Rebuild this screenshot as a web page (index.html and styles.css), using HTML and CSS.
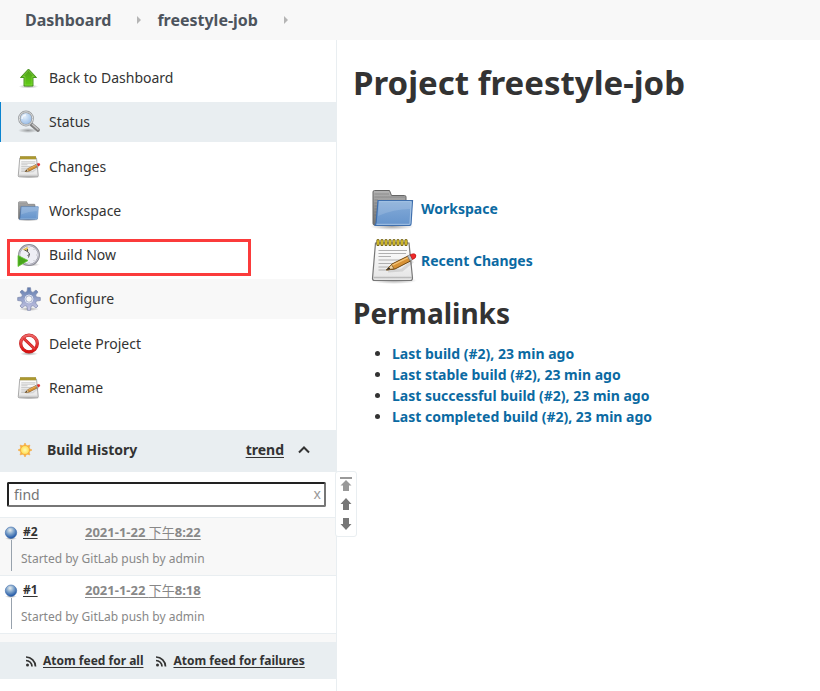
FILE: index.html
```
<!DOCTYPE html>
<html lang="en">
<head>
<meta charset="utf-8">
<title>freestyle-job [Jenkins]</title>
<link rel="stylesheet" href="styles.css">
</head>
<body>
<svg class="sprite" aria-hidden="true">
  <defs>
    <linearGradient id="g-green" x1="0" y1="0" x2="0" y2="1"><stop offset="0" stop-color="#4f9a1c"/><stop offset="1" stop-color="#62d016"/></linearGradient>
    <linearGradient id="g-folder" x1="0" y1="0" x2="0" y2="1"><stop offset="0" stop-color="#86acd8"/><stop offset="1" stop-color="#6594cc"/></linearGradient>
    <linearGradient id="g-grey" x1="0" y1="0" x2="0" y2="1"><stop offset="0" stop-color="#b3b3b3"/><stop offset="1" stop-color="#707070"/></linearGradient>
    <linearGradient id="g-paper" x1="0" y1="0" x2="0" y2="1"><stop offset="0" stop-color="#fff"/><stop offset="1" stop-color="#e4e4e4"/></linearGradient>
    <linearGradient id="g-gear" x1="0" y1="0" x2="0" y2="1"><stop offset="0" stop-color="#5f7cae"/><stop offset="1" stop-color="#cac8e6"/></linearGradient>
    <linearGradient id="g-red" x1="0" y1="0" x2="0" y2="1"><stop offset="0" stop-color="#ee6868"/><stop offset="1" stop-color="#d81010"/></linearGradient>
    <radialGradient id="g-lens" cx=".4" cy=".35" r=".7"><stop offset="0" stop-color="#e4f0fc"/><stop offset="1" stop-color="#8fb6e4"/></radialGradient>
    <radialGradient id="g-ball" cx=".42" cy=".28" r=".7"><stop offset="0" stop-color="#e8ecec"/><stop offset=".45" stop-color="#86a9cd"/><stop offset="1" stop-color="#1f56a5"/></radialGradient>
    <radialGradient id="g-sun"><stop offset="0" stop-color="#fffbb0"/><stop offset="1" stop-color="#ffdc50"/></radialGradient>
    <radialGradient id="g-shade"><stop offset="0" stop-color="#000" stop-opacity=".35"/><stop offset="1" stop-color="#000" stop-opacity="0"/></radialGradient>
  </defs>
  <symbol id="i-up" viewBox="0 0 24 24">
    <ellipse cx="11.500" cy="20.500" rx="10" ry="2" fill="url(#g-shade)"/>
    <path d="M11.500 3 19.500 11.500H16V20H7V11.500H3.500Z" fill="url(#g-green)" stroke="#4c9424"/>
    <path d="M11.500 4.500 17 10.500H15V19H8V10.500H6Z" fill="none" stroke="#8fe04a" stroke-opacity=".5"/>
  </symbol>
  <symbol id="i-search" viewBox="0 0 24 24">
    <ellipse cx="11" cy="20.500" rx="10" ry="2.500" fill="url(#g-shade)"/>
    <path d="M14.500 14.500 21 20" stroke="#808080" stroke-width="3.800" stroke-linecap="round"/>
    <path d="M15.500 14.500 21 19.200" stroke="#c4c4c4" stroke-width="1.500" stroke-linecap="round"/>
    <circle cx="9" cy="8.500" r="6.700" fill="url(#g-lens)" stroke="#979a9d" stroke-width="2.400"/>
    <circle cx="9" cy="8.500" r="6.700" fill="none" stroke="#dcdedf"/>
    <path d="M5 9a4 4 0 0 1 4-4" fill="none" stroke="#fff" stroke-width="1.500" stroke-opacity=".7"/>
  </symbol>
  <symbol id="i-note" viewBox="0 0 48 48">
    <ellipse cx="24" cy="43.500" rx="23" ry="3.500" fill="url(#g-shade)"/>
    <path d="M5.500 6H39L42.500 41Q42.500 43.500 40.500 43.500H4.500Q2.500 43.500 2.500 41.500Z" fill="url(#g-paper)" stroke="#777" stroke-width="1.200"/>
    <path d="M3.500 40.500H42" stroke="#bbb" stroke-width="1.500"/>
    <path d="M8.500 13.500H37M8.500 16.500H36M8.500 19.500H21M8.500 23H31M8.500 26.500H29M8.500 30H23M8.500 33H17" stroke="#b0b0b0" stroke-width="1.200"/>
    <path d="M8 3.500V7.500M12 3.500V7.500M16 3.500V7.500M20 3.500V7.500M24 3.500V7.500M28 3.500V7.500M32 3.500V7.500M36 3.500V7.500" stroke="#6f5c00" stroke-width="3.200" stroke-linecap="round"/>
    <path d="M8 3.800V7.300M12 3.800V7.300M16 3.800V7.300M20 3.800V7.300M24 3.800V7.300M28 3.800V7.300M32 3.800V7.300M36 3.800V7.300" stroke="#edd435" stroke-width="1.500" stroke-linecap="round"/>
    <path d="M18 34 32 33 43 24" stroke="#000" stroke-opacity=".1" stroke-width="3" fill="none"/>
    <path d="M16.500 33 22 27 38 19 40.500 24 25 32Z" fill="#d79134" stroke="#704710"/>
    <path d="M22 28.300 38.500 20.300" stroke="#f3c274" stroke-width="1.300"/>
    <path d="M16.500 33 21.500 27.500 24 31.800Z" fill="#ecd2a4" stroke="#704710" stroke-width=".7"/>
    <path d="M16.500 33 19 30.200 20.300 32Z" fill="#222"/>
    <path d="M37.500 19 40.200 17.700 42.500 22.500 40 24Z" fill="#bfc3c5" stroke="#666" stroke-width=".6"/>
    <path d="M40.200 17.700Q44.500 15.500 45.900 18Q46.700 21 42.500 22.500Z" fill="#ef2929" stroke="#a40000" stroke-width=".5"/>
  </symbol>
  <symbol id="i-folder" viewBox="0 0 48 48">
    <ellipse cx="22" cy="41.500" rx="22" ry="3.500" fill="url(#g-shade)"/>
    <path d="M3 7Q3 5.500 4.500 5.500H19.500L21.500 10.500H34.500Q36 10.500 36 12V40H4.500Q3 40 3 38.500Z" fill="url(#g-grey)" stroke="#666"/>
    <path d="M4.500 9H19M4.500 12H35M4.500 15H8M4.500 18H8M4.500 21H7.500M4.500 24H7M4.500 27H7M4.500 30H6.500" stroke="#555" stroke-opacity=".35"/>
    <path d="M8 15.500H42.500L41 39Q41 40.500 39.500 40.500H4.500Q6 40 6.200 37Z" fill="url(#g-folder)" stroke="#3f6fad" stroke-width="1.200"/>
    <path d="M9.100 16.800H41.200L40 38.500Q40 39.300 39 39.300H6.500" fill="none" stroke="#b5cfea" stroke-opacity=".8"/>
    <path d="M9 17.500H41L40 24Q24 24 8 31Z" fill="#fff" fill-opacity=".14"/>
  </symbol>
  <symbol id="i-clock" viewBox="0 0 24 24">
    <ellipse cx="13" cy="21.500" rx="10" ry="2" fill="url(#g-shade)"/>
    <circle cx="12" cy="12" r="9.900" fill="#eeeef5" stroke="#8a8a94" stroke-width="2"/>
    <circle cx="12" cy="12" r="9.600" fill="none" stroke="#c9c9d6" stroke-width=".9"/>
    <path d="M11.500 8.500 5.500 6.800 10.500 3.800Z" fill="#e3c65a"/>
    <path d="M7.500 7 10.500 8.500 12.500 11 10.500 13M10.500 8.500V6M12.500 11 11.500 14.500" fill="none" stroke="#555" stroke-width="1"/>
    <path d="M12 4.500V5M19.500 12H20M17 6.500 17.500 6M17 17.500 17.500 18M12 19V19.500" stroke="#999"/>
    <path d="M1 12.500 11 17.500 1 23.500Z" fill="#48a51c" stroke="#62c634" stroke-width=".8"/>
  </symbol>
  <symbol id="i-gear" viewBox="0 0 24 24">
    <ellipse cx="12" cy="22" rx="10" ry="2" fill="url(#g-shade)"/>
    <path fill-rule="evenodd" d="M10.500.7h3l.5 3.900 2 .8L19 3l2 2-2.400 3 .8 2 3.900.5v3l-3.900.5-.8 2 2.400 3-2 2-3-2.400-2 .8-.5 3.900h-3l-.5-3.900-2-.8-3 2.400-2-2 2.400-3-.8-2-3.900-.5v-3l3.900-.5.8-2L3 5l2-2 3 2.400 2-.8ZM12 8.700a3.300 3.300 0 1 0 0 6.600 3.300 3.300 0 0 0 0-6.600Z" fill="url(#g-gear)" stroke="#7b86ab" stroke-width=".7"/>
    <circle cx="12" cy="12" r="4" fill="none" stroke="#dde2f0" stroke-width="1"/>
  </symbol>
  <symbol id="i-stop" viewBox="0 0 24 24">
    <ellipse cx="12" cy="21.700" rx="9" ry="2" fill="url(#g-shade)"/>
    <circle cx="12" cy="11.500" r="8.300" fill="#fff" stroke="#c22020" stroke-width="3.200"/>
    <path d="M6.200 6 17.800 17" stroke="#c51414" stroke-width="3"/>
    <circle cx="12" cy="11.500" r="8.300" fill="none" stroke="url(#g-red)" stroke-width="2.300"/>
    <path d="M6.200 6 17.800 17" stroke="#e23c3c" stroke-width="2"/>
  </symbol>
  <symbol id="i-sun" viewBox="0 0 16 16">
    <path d="M8 1 9.500 4 12.900 3.100 12 6.500 15 8 12 9.500 12.900 12.900 9.500 12 8 15 6.500 12 3.100 12.900 4 9.500 1 8 4 6.500 3.100 3.100 6.500 4Z" fill="#f8ad3c" stroke="#f5b04e" stroke-width=".7"/>
    <circle cx="8" cy="8" r="4.500" fill="url(#g-sun)" stroke="#f2a43c" stroke-width=".7"/>
  </symbol>
  <symbol id="i-ball" viewBox="0 0 14 14">
    <ellipse cx="7" cy="12.500" rx="6" ry="1.500" fill="url(#g-shade)"/>
    <circle cx="7" cy="6.700" r="5.700" fill="url(#g-ball)" stroke="#3b69ab" stroke-width=".6"/>
  </symbol>
  <symbol id="i-feed" viewBox="0 0 12 12">
    <circle cx="2.500" cy="10" r="1.500" fill="#333"/>
    <path d="M1 5.500A6 6 0 0 1 7 11.500M1 2A9.500 9.500 0 0 1 10.500 11.500" fill="none" stroke="#333" stroke-width="1.700"/>
  </symbol>
</svg>

<nav class="breadcrumbs" aria-label="Breadcrumb">
  <a href="#">Dashboard</a><span class="crumb-arrow"></span>
  <a href="#">freestyle-job</a><span class="crumb-arrow"></span>
</nav>

<div class="page">
  <aside class="side">
    <nav class="tasks">
      <a class="task" href="#"><svg class="icon"><use href="#i-up"/></svg>Back to Dashboard</a>
      <a class="task task-active" href="#"><svg class="icon"><use href="#i-search"/></svg>Status</a>
      <a class="task" href="#"><svg class="icon"><use href="#i-note"/></svg>Changes</a>
      <a class="task" href="#"><svg class="icon"><use href="#i-folder"/></svg>Workspace</a>
      <a class="task task-marked" href="#"><svg class="icon"><use href="#i-clock"/></svg>Build Now</a>
      <a class="task task-hover" href="#"><svg class="icon"><use href="#i-gear"/></svg>Configure</a>
      <a class="task" href="#"><svg class="icon"><use href="#i-stop"/></svg>Delete Project</a>
      <a class="task" href="#"><svg class="icon"><use href="#i-note"/></svg>Rename</a>
    </nav>

    <section class="history">
      <header class="history-head">
        <svg class="sun"><use href="#i-sun"/></svg>
        <h2>Build History</h2>
        <a class="trend" href="#">trend</a>
        <button class="collapse" type="button" aria-label="Collapse">
          <svg viewBox="0 0 12 8"><path d="M1 6.500 6 1.500 11 6.500" fill="none" stroke="#333" stroke-width="2"/></svg>
        </button>
      </header>
      <div class="find">
        <input type="text" placeholder="find" aria-label="Find builds">
        <button class="clear" type="button" aria-label="Clear">x</button>
      </div>
      <ol class="builds">
        <li class="build">
          <svg class="ball"><use href="#i-ball"/></svg>
          <a class="number" href="#">#2</a>
          <a class="date" href="#">2021-1-22 <span class="meridiem" lang="zh">下午</span>8:22</a>
          <p class="cause">Started by GitLab push by admin</p>
        </li>
        <li class="build">
          <svg class="ball"><use href="#i-ball"/></svg>
          <a class="number" href="#">#1</a>
          <a class="date" href="#">2021-1-22 <span class="meridiem" lang="zh">下午</span>8:18</a>
          <p class="cause">Started by GitLab push by admin</p>
        </li>
      </ol>
      <footer class="feeds">
        <svg class="feed"><use href="#i-feed"/></svg><a href="#">Atom feed for all</a>
        <svg class="feed"><use href="#i-feed"/></svg><a href="#">Atom feed for failures</a>
      </footer>
      <div class="pager">
        <button type="button" aria-label="Newest"><svg viewBox="0 0 12 14"><path d="M0 0H12V2H0ZM6 3 11.500 8.500H9V14H3V8.500H.5Z" fill="#999"/></svg></button>
        <button type="button" aria-label="Newer"><svg viewBox="0 0 12 14"><path d="M6 1 11.500 7H9V13H3V7H.5Z" fill="#777"/></svg></button>
        <button type="button" aria-label="Older"><svg viewBox="0 0 12 14"><path d="M6 13 11.500 7H9V1H3V7H.5Z" fill="#777"/></svg></button>
      </div>
    </section>
  </aside>

  <main class="main">
    <h1>Project freestyle-job</h1>
    <div class="summary">
      <a href="#"><svg class="icon-large"><use href="#i-folder"/></svg>Workspace</a>
      <a href="#"><svg class="icon-large"><use href="#i-note"/></svg>Recent Changes</a>
    </div>
    <h2>Permalinks</h2>
    <ul class="permalinks">
      <li><a href="#">Last build (#2), 23 min ago</a></li>
      <li><a href="#">Last stable build (#2), 23 min ago</a></li>
      <li><a href="#">Last successful build (#2), 23 min ago</a></li>
      <li><a href="#">Last completed build (#2), 23 min ago</a></li>
    </ul>
  </main>
</div>
</body>
</html>
```
FILE: styles.css
```
* { box-sizing: border-box; }

body {
  display: flex;
  flex-direction: column;
  min-height: 100vh;
  margin: 0;
  background: #fff;
  color: #333;
  font: 14px/20px "Noto Sans", "Open Sans", "Noto Sans CJK SC", sans-serif;
}

h1, h2, p, ul, ol { margin: 0; padding: 0; }
a { color: inherit; text-decoration: none; }
button { padding: 0; border: 0; background: none; font: inherit; }
.sprite { position: absolute; width: 0; height: 0; }

.breadcrumbs {
  display: flex;
  align-items: center;
  height: 40px;
  padding-left: 25px;
  background: #f8f8f8;
  color: #4d545d;
  font-size: 16px;
  font-weight: 700;
}
.crumb-arrow {
  margin: 0 16px 0 26px;
  border: 4px solid transparent;
  border-left-color: #b5b5b5;
  border-right-width: 0;
}

.page { display: grid; grid-template-columns: 337px 1fr; flex: 1; }
.side { border-right: 1px solid #e9eef1; }

.tasks {
  display: grid;
  align-content: space-between;
  min-height: 390px;
  padding: 18px 0 22px;
}
.task {
  position: relative;
  display: flex;
  align-items: center;
  gap: 8px;
  height: 40px;
  padding-left: 17px;
}
.icon { width: 24px; height: 24px; }
.task-active { background: #e9eef1; box-shadow: inset 1px 0 #0b84d0; }
.task-hover { background: #f8f8f8; }
.task-marked::after {
  content: "";
  position: absolute;
  inset: 4px 85px -1px 7px;
  border: 3px solid #fb3b3b;
}

.history { position: relative; font-size: 12px; }
.history-head {
  display: flex;
  align-items: center;
  height: 42px;
  padding: 0 26px 2px 17px;
  background: #e9eef1;
  font-size: 14px;
  font-weight: 700;
}
.sun { width: 16px; height: 16px; margin-right: 14px; }
.history-head h2 { flex: 1; font-size: 14px; line-height: 20px; }
.trend, .feeds a, .number, .date { text-decoration: underline; text-underline-offset: 2px; }
.collapse { width: 12px; height: 8px; margin-left: 14px; }
.collapse svg { display: block; width: 12px; height: 8px; }

.find { position: relative; padding: 10px 10px 10px 7px; }
.find input {
  display: block;
  width: 100%;
  height: 25px;
  padding: 0 20px 0 5px;
  border: 2px solid #767676;
  border-top-color: #222;
  border-left-color: #222;
  border-radius: 2px;
  font: inherit;
  font-size: 14px;
}
.find input::placeholder { color: #757575; }
.clear { position: absolute; top: 12px; right: 15px; color: #999; font-size: 14px; line-height: 20px; }

.builds { padding-bottom: 8px; background: #f8f8f8; list-style: none; }
.build {
  position: relative;
  display: grid;
  grid-template-columns: 19px 62px 1fr;
  grid-template-rows: 20px 20px;
  row-gap: 7px;
  height: 58px;
  padding: 4px 0 0 4px;
  border-top: 1px solid #e9eef1;
}
.build:last-child { height: 59px; border-bottom: 1px solid #e9eef1; background: #fff; }
.build::after {
  content: "";
  position: absolute;
  left: 11px;
  top: 22px;
  bottom: 4px;
  width: 1px;
  background: #98a2ad;
}
.ball { width: 14px; height: 14px; margin-top: 4px; }
.number { font-weight: 700; }
.date { color: #888; font-size: 13px; font-weight: 700; }
.meridiem { font-weight: 400; }
.cause { grid-column: 1 / -1; padding-left: 17px; color: #888; }

.feeds {
  display: flex;
  align-items: center;
  height: 37px;
  padding-left: 25px;
  background: #e9eef1;
  font-weight: 700;
}
.feed { width: 12px; height: 12px; margin-right: 6px; }
.feeds a + .feed { margin-left: 12px; }

.pager {
  position: absolute;
  top: 41px;
  right: -21px;
  display: grid;
  gap: 6px;
  padding: 5px 4px;
  border: 1px solid #e9eef1;
  border-radius: 3px;
  background: #fff;
}
.pager button { height: 14px; }
.pager svg { display: block; width: 12px; height: 14px; }

.main { padding: 19px 16px; }
.main h1 { font-size: 33px; line-height: 48px; }
.main h2 { font-size: 28px; line-height: 40px; }
.main a { color: #0b6aa2; font-weight: 700; }
.summary { display: grid; justify-items: start; gap: 4px; padding: 78px 0 8px 17px; }
.summary a { display: flex; align-items: center; gap: 3px; }
.icon-large { width: 48px; height: 48px; }
.permalinks { padding: 10px 0 0 39px; line-height: 21px; }
```
